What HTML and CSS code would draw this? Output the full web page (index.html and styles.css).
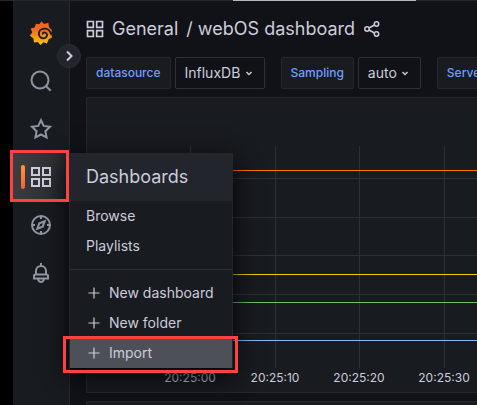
FILE: index.html
```html
<!DOCTYPE html>
<html lang="en">
<head>
<meta charset="utf-8">
<title>webOS dashboard</title>
<link rel="stylesheet" href="styles.css">
</head>
<body>
<svg class="defs" aria-hidden="true">
  <defs>
    <linearGradient id="flame" x1="0" y1="0" x2="0" y2="1"><stop offset="0" stop-color="#f05a28"/><stop offset=".4" stop-color="#f2701f"/><stop offset="1" stop-color="#fbca0a"/></linearGradient>
    <symbol id="apps" viewBox="0 0 24 24"><path d="M3 3h7v7H3zM14 3h7v7h-7zM3 14h7v7H3zM14 14h7v7h-7z"/></symbol>
    <symbol id="plus" viewBox="0 0 16 16"><path d="M8 2.500v11M2.500 8h11"/></symbol>
    <symbol id="chevron" viewBox="0 0 16 16"><path d="M5.500 7 8 9.500 10.500 7"/></symbol>
  </defs>
</svg>
<div class="app">
  <nav class="sidebar" aria-label="Main">
    <a class="nav-item" href="#" aria-label="Home">
      <svg class="icon-lg" viewBox="0 0 24 24">
        <path fill="url(#flame)" stroke="none" d="M12.500 .2 15 2.900 19.400 1.800 20.100 6.200 23 9.300 22 12.500 23 16.500 19.700 18.300 17.900 22.600 14.500 21.300 11.400 23.900 8.900 21.100 4.900 21.500 4.500 17.600 .8 14.800 3.200 11.400 1.800 7.500 5.600 6.600 7 2.700 10.300 3.300z"/>
        <path class="swirl" d="M22 13.500C21.300 9.500 18.300 7.400 15 7.600 11.800 7.900 9.700 10.300 9.900 13.100 10.100 15.800 12.200 17.500 14.600 17.300 16.900 17.100 18.200 15.400 18 13.700 17.800 12.100 16.400 11.200 15 11.400 13.900 11.600 13.500 12.700 14 13.500"/>
      </svg>
    </a>
    <a class="nav-item" href="#" aria-label="Search"><svg class="icon-lg" viewBox="0 0 24 24"><circle cx="11" cy="11" r="8.500"/><path d="m17.200 17.200 4.500 4.500"/></svg></a>
    <a class="nav-item" href="#" aria-label="Starred"><svg class="icon-lg" viewBox="0 0 24 24"><path d="m12 3.200 2.700 5.700 6.300.9-4.600 4.400 1.200 6.300-5.600-3-5.600 3 1.200-6.300L3 9.800l6.300-.9z"/></svg></a>
    <div class="nav-group">
      <a class="nav-item active" href="#" aria-label="Dashboards"><svg class="icon-lg"><use href="#apps"/></svg></a>
      <div class="menu">
        <a class="menu-title" href="#">Dashboards</a>
        <a class="menu-item" href="#">Browse</a>
        <a class="menu-item" href="#">Playlists</a>
        <hr>
        <a class="menu-item" href="#"><svg class="icon-sm"><use href="#plus"/></svg>New dashboard</a>
        <a class="menu-item" href="#"><svg class="icon-sm"><use href="#plus"/></svg>New folder</a>
        <a class="menu-item selected" href="#"><svg class="icon-sm"><use href="#plus"/></svg>Import</a>
      </div>
    </div>
    <a class="nav-item" href="#" aria-label="Explore"><svg class="icon-lg" viewBox="0 0 24 24"><circle cx="12" cy="12" r="9"/><path d="M12 3v3M12 18v3M3 12h3M18 12h3M15.700 8.300l-2 5.400-5.400 2 2-5.400z"/></svg></a>
    <a class="nav-item" href="#" aria-label="Alerting"><svg class="icon-lg" viewBox="0 0 24 24"><path d="M12 2v3M7 13v-3a5 5 0 0 1 10 0v3M6.500 13.500h11q1.500 0 1.500 1.500v2.500H5V15q0-1.500 1.500-1.500zM9 18q.8 3 3 3t3-3"/></svg></a>
    <button class="expand" type="button" aria-label="Expand menu"><svg class="icon-sm" viewBox="0 0 16 16"><path d="m6 3.500 4.500 4.500L6 12.500"/></svg></button>
  </nav>
  <main class="page">
    <header class="toolbar">
      <svg class="icon-md"><use href="#apps"/></svg>
      <h1><a href="#">General</a><a href="#">/ webOS dashboard</a></h1>
      <button class="share" type="button" aria-label="Share dashboard"><svg class="icon-sm" viewBox="0 0 16 16"><circle cx="12.500" cy="3" r="2.200"/><circle cx="3" cy="8" r="2.200"/><circle cx="12.500" cy="13" r="2.200"/><path d="m5 7 5.500-3M5 9l5.500 3"/></svg></button>
    </header>
    <form class="variables">
      <div class="variable"><label for="ds">datasource</label><span class="picker"><select id="ds"><option>InfluxDB</option></select><svg class="icon-sm"><use href="#chevron"/></svg></span></div>
      <div class="variable"><label for="sampling">Sampling</label><span class="picker"><select id="sampling"><option>auto</option></select><svg class="icon-sm"><use href="#chevron"/></svg></span></div>
      <div class="variable"><label for="server">Server</label><span class="picker"><select id="server"><option>All</option></select><svg class="icon-sm"><use href="#chevron"/></svg></span></div>
    </form>
    <section class="panel">
      <svg class="chart" role="img" aria-label="Time series">
        <path class="grid" d="M103.500 48v222M188.500 48v222M272.500 48v222M357.500 48v222"/>
        <g class="grid">
          <line x2="100%" y1="80.500" y2="80.500"/><line x2="100%" y1="119.500" y2="119.500"/><line x2="100%" y1="157.500" y2="157.500"/><line x2="100%" y1="196.500" y2="196.500"/><line x2="100%" y1="235.500" y2="235.500"/>
        </g>
        <line class="orange" x2="100%" y1="72.500" y2="72.500"/>
        <line class="yellow" x2="100%" y1="176.500" y2="176.500"/>
        <line class="green" x2="100%" y1="204.500" y2="204.500"/>
        <line class="blue" x2="100%" y1="242.500" y2="242.500"/>
        <g class="ticks"><text x="103" y="284">20:25:00</text><text x="188" y="284">20:25:10</text><text x="272" y="284">20:25:20</text><text x="357" y="284">20:25:30</text></g>
      </svg>
    </section>
    <section class="panel next"></section>
  </main>
  <div class="progress"></div>
  <div class="callout callout-nav"></div>
  <div class="callout callout-import"></div>
</div>
</body>
</html>
```
FILE: styles.css
```css
* { box-sizing: border-box; }

body {
  margin: 0;
  background: #000;
  color: #ccccdc;
  font: 14px/20px Inter, "Liberation Sans", sans-serif;
}

a { color: inherit; text-decoration: none; }

button {
  padding: 0;
  border: 0;
  background: none;
  color: inherit;
}

svg {
  display: block;
  flex: none;
  fill: none;
  stroke: currentColor;
  stroke-width: 2;
}

.defs { position: absolute; width: 0; height: 0; }
.icon-lg { width: 24px; height: 24px; }
.icon-md { width: 20px; height: 20px; }
.icon-sm { width: 16px; height: 16px; stroke-width: 1.5; }

.app {
  position: relative;
  display: flex;
  height: 100vh;
  padding-left: 13px;
  overflow: hidden;
}

.sidebar {
  position: relative;
  z-index: 1;
  flex: none;
  width: 57px;
  padding-top: 9px;
  border-right: 1px solid #26282d;
  background: #181b1f;
  color: #9094a0;
}

.nav-item {
  position: relative;
  display: flex;
  align-items: center;
  justify-content: center;
  height: 48px;
}

.swirl { stroke: #181b1f; stroke-width: 1.8; }

.nav-group { position: relative; }

.nav-item.active {
  background: linear-gradient(100deg, #3c3e42, #303236 55%, #202226);
  color: #ccccdc;
}

.nav-item.active::before {
  content: "";
  position: absolute;
  left: 8px;
  top: 12px;
  width: 4px;
  height: 24px;
  border-radius: 2px;
  background: linear-gradient(#ff9830, #f55f3e);
}

.expand {
  position: absolute;
  top: 44px;
  right: -12px;
  display: grid;
  place-items: center;
  width: 24px;
  height: 24px;
  border: 1px solid #2c2e35;
  border-radius: 50%;
  background: #22252b;
  color: #ccccdc;
}

.expand svg { stroke-width: 2; }

.menu {
  position: absolute;
  top: 0;
  left: 100%;
  width: 164px;
  border: solid #25272c;
  border-width: 0 1px;
  background: #181b1f;
  box-shadow: 0 8px 24px #010409;
  color: #ccccdc;
  white-space: nowrap;
}

.menu-title {
  display: flex;
  align-items: center;
  height: 48px;
  padding-left: 16px;
  background: #22252b;
  font-size: 18px;
}

.menu-item {
  display: flex;
  align-items: center;
  gap: 7px;
  height: 30px;
  padding-left: 16px;
}

.menu-item svg { stroke-width: 1.2; }

.menu-item.selected { background: #4d5057; }

.menu hr {
  margin: 8px 0;
  border: 0;
  border-top: 1px solid #2c2e33;
}

.page {
  flex: 1;
  min-width: 0;
  padding: 13px 0 0 16px;
  background: #111217;
}

.toolbar {
  display: flex;
  align-items: center;
  height: 32px;
  margin-left: -1px;
}

.toolbar h1 {
  display: flex;
  gap: 8px;
  margin: 0 9px 0 7px;
  font-size: 18px;
  font-weight: 400;
  white-space: nowrap;
}

.variables {
  display: flex;
  gap: 16px;
  margin: 12px 0 8px;
}

.variable { display: flex; gap: 4px; }

.variable label {
  height: 32px;
  padding: 0 9px;
  border: 1px solid #25272c;
  border-radius: 2px;
  background: #181b1f;
  color: #6e9fff;
  font-size: 12px;
  font-weight: 500;
  line-height: 30px;
}

.picker { display: grid; align-items: center; }
.picker > * { grid-area: 1 / 1; }

.picker select {
  height: 32px;
  padding: 0 23px 0 9px;
  border: 1px solid #303137;
  border-radius: 2px;
  background: #111217;
  color: inherit;
  font: inherit;
  appearance: none;
}

.picker svg {
  justify-self: end;
  margin-right: 8px;
  pointer-events: none;
}

.panel {
  height: 296px;
  border: solid #25272c;
  border-width: 1px 0 1px 1px;
  border-radius: 2px 0 0 2px;
  background: #181b1f;
}

.panel.next { margin-top: 8px; }

.chart { width: 100%; height: 294px; stroke-width: 1; }
.grid { stroke: #2d3033; }
.orange { stroke: #ff780a; }
.yellow { stroke: #f2cc0c; }
.green { stroke: #73bf69; }
.blue { stroke: #8ab8ff; }

.ticks {
  fill: #ccccdc;
  stroke: none;
  font-size: 12px;
  text-anchor: middle;
}

.progress {
  position: absolute;
  z-index: 2;
  inset: 0 0 auto;
  height: 1px;
  background: linear-gradient(90deg, #25272c 233px, #b5b7b9 233px 416px, #25272c 416px);
}

.callout {
  position: absolute;
  z-index: 3;
  border: 3px solid #ff4141;
  pointer-events: none;
}

.callout-nav { left: 10px; top: 150px; width: 59px; height: 52px; }
.callout-import { left: 63px; top: 336px; width: 175px; height: 37px; }
```
